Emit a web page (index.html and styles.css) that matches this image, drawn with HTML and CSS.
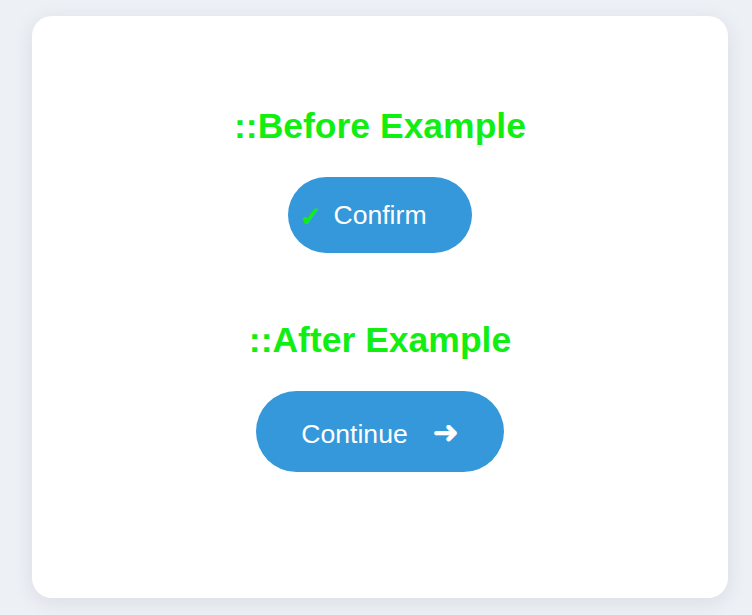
FILE: index.html
```html
<!DOCTYPE html>
<html lang="en">
<head>
<meta charset="utf-8">
<title>Pseudo-element examples</title>
<link rel="stylesheet" href="styles.css">
</head>
<body>
  <main class="card">
    <section class="example">
      <h2 class="title">::Before Example</h2>
      <button class="btn btn-before">Confirm</button>
    </section>
    <section class="example">
      <h2 class="title">::After Example</h2>
      <button class="btn btn-after">Continue</button>
    </section>
  </main>
</body>
</html>
```

FILE: styles.css
```css
html, body {
  margin: 0;
}
body {
  background: #edf0f5;
  padding: 16px 24px 17px 32px;
  font-family: "Liberation Sans", Arial, sans-serif;
}
.card {
  background: #ffffff;
  border-radius: 20px;
  box-shadow: 0 4px 20px rgba(40, 60, 90, 0.10);
  padding: 90px 0 126px;
  display: flex;
  flex-direction: column;
  align-items: center;
  gap: 67px;
}
.example {
  display: flex;
  flex-direction: column;
  align-items: center;
  gap: 30px;
}
.title {
  margin: 0;
  font-size: 35.5px;
  font-weight: bold;
  color: #11ee11;
  line-height: normal;
}
.btn {
  position: relative;
  border: none;
  background: #3498db;
  color: #ffffff;
  font-family: "Liberation Sans", Arial, sans-serif;
  font-size: 26.6px;
  padding: 22.5px 45px;
  border-radius: 42px;
  line-height: normal;
  cursor: pointer;
}
.btn-before::before {
  content: "\2713";
  position: absolute;
  left: 11px;
  top: 50%;
  transform: translateY(-46%);
  color: #11ee11;
  font-family: "DejaVu Sans", sans-serif;
  font-size: 27px;
  -webkit-text-stroke: 1px #11ee11;
}
.btn-after::after {
  content: "\279C";
  margin-left: 25px;
  font-family: "DejaVu Sans", sans-serif;
  font-weight: bold;
  font-size: 31px;
  -webkit-text-stroke: 0.6px #ffffff;
}
```
